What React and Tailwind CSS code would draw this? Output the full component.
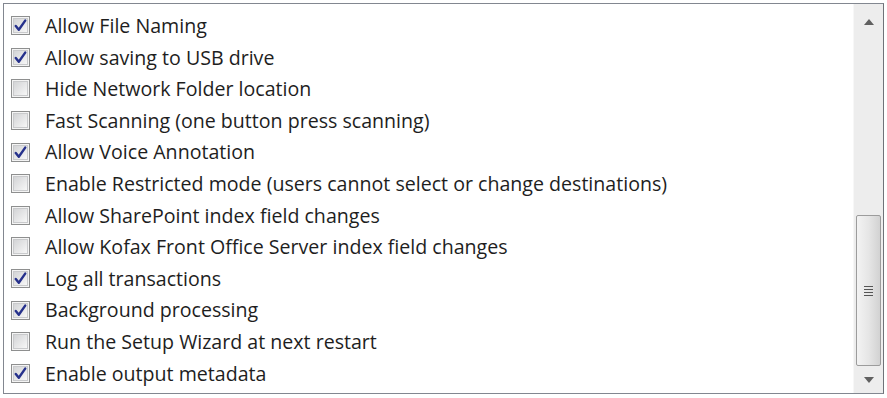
import React from 'react'

const options = [
  { label: 'Allow File Naming', checked: true },
  { label: 'Allow saving to USB drive', checked: true },
  { label: 'Hide Network Folder location', checked: false },
  { label: 'Fast Scanning (one button press scanning)', checked: false },
  { label: 'Allow Voice Annotation', checked: true },
  { label: 'Enable Restricted mode (users cannot select or change destinations)', checked: false },
  { label: 'Allow SharePoint index field changes', checked: false },
  { label: 'Allow Kofax Front Office Server index field changes', checked: false },
  { label: 'Log all transactions', checked: true },
  { label: 'Background processing', checked: true },
  { label: 'Run the Setup Wizard at next restart', checked: false },
  { label: 'Enable output metadata', checked: true },
]

function CheckBox({ checked }) {
  return (
    <span className="flex h-[19px] w-[19px] shrink-0 items-center justify-center border border-[#8e8f8f] bg-[#f4f4f4]">
      <span className="flex h-[15px] w-[15px] items-center justify-center border border-[#c9cacc] bg-gradient-to-br from-[#d3d4d6] to-[#f7f7f7]">
        {checked && (
          <svg width="13" height="13" viewBox="0 0 13 13">
            <path d="M1.8 7 L4.8 10.8 L11.2 1.6" fill="none" stroke="#26318c" strokeWidth="2.4" strokeLinecap="round" strokeLinejoin="round" />
          </svg>
        )}
      </span>
    </span>
  )
}

function ScrollBar() {
  return (
    <div className="flex w-[30px] shrink-0 flex-col items-center border-l border-[#f7f7f7] bg-[#ededed]">
      <div className="flex h-[36px] w-full items-center justify-center">
        <svg width="10" height="6" viewBox="0 0 10 6">
          <path d="M5 0 L10 6 L0 6 Z" fill="#606060" />
        </svg>
      </div>
      <div className="h-[175px]" />
      <div className="flex h-[151px] w-[25px] items-center justify-center rounded-[2px] border border-[#9c9c9c] bg-gradient-to-r from-[#f3f3f3] via-[#e6e6e6] to-[#d2d2d2]">
        <div className="flex flex-col gap-[2px]">
          <div className="h-[1px] w-[9px] bg-[#555]" />
          <div className="h-[1px] w-[9px] bg-[#555]" />
          <div className="h-[1px] w-[9px] bg-[#555]" />
          <div className="h-[1px] w-[9px] bg-[#555]" />
        </div>
      </div>
      <div className="flex flex-1 items-center justify-center">
        <svg width="10" height="6" viewBox="0 0 10 6">
          <path d="M0 0 L10 0 L5 6 Z" fill="#606060" />
        </svg>
      </div>
    </div>
  )
}

export default function App() {
  return (
    <div className="h-[398px] w-[887px] bg-white p-[3px]">
      <div className="flex h-[391px] w-[881px] border border-[#828790] border-r-[#6f7278]">
        <div className="flex-1 pt-[6px]">
          {options.map((o) => (
            <div key={o.label} className="flex h-[31.6px] items-center pl-[7px]">
              <CheckBox checked={o.checked} />
              <span className="pl-[15px] text-[19.6px] leading-none text-[#1e1e1e]" style={{ fontFamily: '"Open Sans", "Noto Sans", sans-serif' }}>
                {o.label}
              </span>
            </div>
          ))}
        </div>
        <ScrollBar />
      </div>
    </div>
  )
}
